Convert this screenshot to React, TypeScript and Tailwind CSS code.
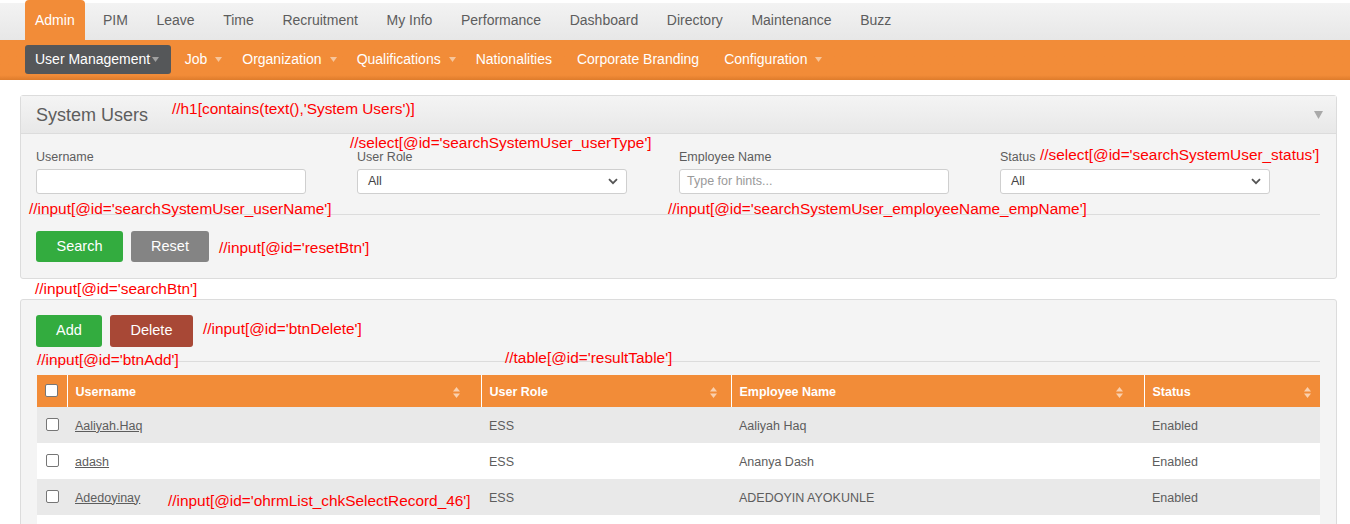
import React from 'react';

const font = { fontFamily: '"Liberation Sans", Arial, sans-serif' };

const topTabs = ['PIM', 'Leave', 'Time', 'Recruitment', 'My Info', 'Performance', 'Dashboard', 'Directory', 'Maintenance', 'Buzz'];

const subItems = [
  { label: 'Job', arrow: true },
  { label: 'Organization', arrow: true },
  { label: 'Qualifications', arrow: true },
  { label: 'Nationalities', arrow: false },
  { label: 'Corporate Branding', arrow: false },
  { label: 'Configuration', arrow: true },
];

const rows = [
  { user: 'Aaliyah.Haq', role: 'ESS', name: 'Aaliyah Haq', status: 'Enabled' },
  { user: 'adash', role: 'ESS', name: 'Ananya Dash', status: 'Enabled' },
  { user: 'Adedoyinay', role: 'ESS', name: 'ADEDOYIN AYOKUNLE', status: 'Enabled' },
];

// annotations the screenshot has pasted on top of the page
const notes = [
  { text: "//h1[contains(text(),'System Users')]", x: 172, y: 100 },
  { text: "//select[@id='searchSystemUser_userType']", x: 350, y: 134 },
  { text: "//select[@id='searchSystemUser_status']", x: 1040, y: 146 },
  { text: "//input[@id='searchSystemUser_userName']", x: 29, y: 200 },
  { text: "//input[@id='searchSystemUser_employeeName_empName']", x: 668, y: 200 },
  { text: "//input[@id='resetBtn']", x: 219, y: 239 },
  { text: "//input[@id='searchBtn']", x: 35, y: 280 },
  { text: "//input[@id='btnDelete']", x: 203, y: 320 },
  { text: "//input[@id='btnAdd']", x: 37, y: 351 },
  { text: "//table[@id='resultTable']", x: 505, y: 349 },
  { text: "//input[@id='ohrmList_chkSelectRecord_46']", x: 168, y: 492 },
];

const Caret = ({ color }: { color: string }) => (
  <svg width="7" height="5" viewBox="0 0 7 5" className="inline-block">
    <path d="M0 0h7L3.5 5z" fill={color} />
  </svg>
);

const Chevron = () => (
  <svg width="10" height="7" viewBox="0 0 10 7">
    <path d="M1 1.2l4 4 4-4" stroke="#555" strokeWidth="1.8" fill="none" />
  </svg>
);

const SortIcon = () => (
  <svg width="7" height="11" viewBox="0 0 7 11">
    <path d="M0 4.5h7L3.5 0z" fill="rgba(255,255,255,0.6)" />
    <path d="M0 6.5h7L3.5 11z" fill="rgba(255,255,255,0.6)" />
  </svg>
);

const Checkbox = () => (
  <span className="inline-block w-[13px] h-[13px] rounded-[2px] border border-[#767676] bg-white" />
);

const Select = () => (
  <div className="w-[270px] h-[25px] border border-[#cfcfcf] rounded-[3px] bg-white flex items-center justify-between pl-[10px] pr-[8px] text-[12.5px] text-[#444]">
    <span>All</span>
    <Chevron />
  </div>
);

export default function App() {
  return (
    <div style={font} className="relative w-full h-[524px] bg-white overflow-hidden">
      {/* top menu */}
      <div className="h-[40px] bg-white">
        <div className="h-full flex items-end pl-[25px] bg-gradient-to-b from-white from-[7%] via-[#f3f3f3] via-[8%] to-[#e7e7e7]">
          <div className="h-[40px] px-[10px] mr-[4px] flex items-center rounded-t-[4px] bg-[#f28c38] text-white text-[14px]">Admin</div>
          {topTabs.map((t) => (
            <div key={t} className="h-[40px] px-[14.3px] flex items-center text-[14px] text-[#5d5d5d]">
              {t}
            </div>
          ))}
        </div>
      </div>

      {/* sub menu */}
      <div className="h-[40px] pl-[25px] pb-[1px] flex items-center bg-gradient-to-b from-[#f28c38] from-[88%] to-[#de7c2c]">
        <div className="h-[29px] flex items-center pl-[10px] pr-[12px] rounded-[3px] bg-[#555759] text-white text-[14px]">
          User Management
          <span className="ml-[2px] mb-[1px]"><Caret color="#a0a0a0" /></span>
        </div>
        <div className="flex items-center ml-[1px]">
          {subItems.map((s) => (
            <div key={s.label} className="px-[12.5px] flex items-center text-white text-[14px]">
              {s.label}
              {s.arrow && <span className="ml-[8px] mr-[-5px] mb-[1px]"><Caret color="#f7c59a" /></span>}
            </div>
          ))}
        </div>
      </div>

      {/* search panel */}
      <div className="ml-[20px] mr-[13px] mt-[15px] border border-[#dcdcdc] rounded-[3px] bg-[#f4f4f4]">
        <div className="h-[38px] px-[15px] flex items-center justify-between border-b border-[#dcdcdc] bg-gradient-to-b from-[#f4f4f4] to-[#e8e8e8]">
          <h1 className="text-[18px] text-[#5d5d5d] pt-[1px]">System Users</h1>
          <span className="mr-[-2px]">
            <svg width="9" height="8" viewBox="0 0 9 8"><path d="M0 0h9L4.5 8z" fill="#a9a9a9" /></svg>
          </span>
        </div>
        <div className="pl-[15px] pr-[16px] pt-[15px] pb-[16px]">
          <div className="grid grid-cols-[321px_322px_321px_1fr] text-[12.5px] text-[#5d5d5d]">
            <div>
              <div className="h-[16px] mb-[4px] leading-[16px]">Username</div>
              <div className="w-[270px] h-[25px] border border-[#cfcfcf] rounded-[3px] bg-white" />
            </div>
            <div>
              <div className="h-[16px] mb-[4px] leading-[16px]">User Role</div>
              <Select />
            </div>
            <div>
              <div className="h-[16px] mb-[4px] leading-[16px]">Employee Name</div>
              <div className="w-[270px] h-[25px] border border-[#cfcfcf] rounded-[3px] bg-white flex items-center pl-[7px] text-[#9a9a9a]">
                Type for hints...
              </div>
            </div>
            <div>
              <div className="h-[16px] mb-[4px] leading-[16px]">Status</div>
              <Select />
            </div>
          </div>
          <div className="mt-[20px] border-t border-[#dcdcdc]" />
          <div className="mt-[16px] flex gap-[8px]">
            <button className="w-[87px] h-[31px] rounded-[3px] bg-[#33ac3f] text-white text-[14.5px]">Search</button>
            <button className="w-[78px] h-[31px] rounded-[3px] bg-[#848484] text-white text-[14.5px]">Reset</button>
          </div>
        </div>
      </div>

      {/* results panel */}
      <div className="ml-[20px] mr-[13px] mt-[20px] border border-[#dcdcdc] rounded-[3px] bg-[#f4f4f4] pl-[15px] pr-[16px] pt-[15px] pb-[10px]">
        <div className="flex gap-[8px]">
          <button className="w-[66px] h-[32px] rounded-[3px] bg-[#33ac3f] text-white text-[14.5px]">Add</button>
          <button className="w-[83px] h-[32px] rounded-[3px] bg-[#a84836] text-white text-[14.5px]">Delete</button>
        </div>
        <div className="mt-[14px] border-t border-[#dcdcdc]" />
        <table className="mt-[13px] ml-[1px] w-[1283px] border-collapse text-[12.5px]">
          <thead>
            <tr className="h-[32px] bg-[#f28c38] text-white font-bold text-left">
              <th className="w-[30px] border-r border-white text-center pt-[4px]"><Checkbox /></th>
              <th className="w-[414px] border-r border-white pl-[8px] pr-[21px] pt-[3px]">
                <div className="flex items-center justify-between">Username<SortIcon /></div>
              </th>
              <th className="w-[250px] border-r border-white pl-[8px] pr-[14px] pt-[3px]">
                <div className="flex items-center justify-between">User Role<SortIcon /></div>
              </th>
              <th className="w-[413px] border-r border-white pl-[8px] pr-[21px] pt-[3px]">
                <div className="flex items-center justify-between">Employee Name<SortIcon /></div>
              </th>
              <th className="pl-[8px] pr-[9px] pt-[3px]">
                <div className="flex items-center justify-between">Status<SortIcon /></div>
              </th>
            </tr>
          </thead>
          <tbody className="text-[#5d5d5d]">
            {rows.map((r, i) => (
              <tr key={r.user} className={i % 2 === 0 ? 'h-[36px] bg-[#e9e9e9]' : 'h-[36px] bg-white'}>
                <td className="text-center align-top pt-[11px]"><Checkbox /></td>
                <td className="pl-[8px] pt-[2px]"><span className="underline">{r.user}</span></td>
                <td className="pl-[8px] pt-[2px]">{r.role}</td>
                <td className="pl-[8px] pt-[2px]">{r.name}</td>
                <td className="pl-[8px] pt-[2px]">{r.status}</td>
              </tr>
            ))}
            <tr className="h-[36px] bg-white">
              <td colSpan={5} />
            </tr>
          </tbody>
        </table>
      </div>

      {notes.map((n) => (
        <div
          key={n.text}
          className="absolute text-[15.4px] leading-[18px] text-[#ff0000] whitespace-nowrap"
          style={{ left: n.x, top: n.y }}
        >
          {n.text}
        </div>
      ))}
    </div>
  );
}
